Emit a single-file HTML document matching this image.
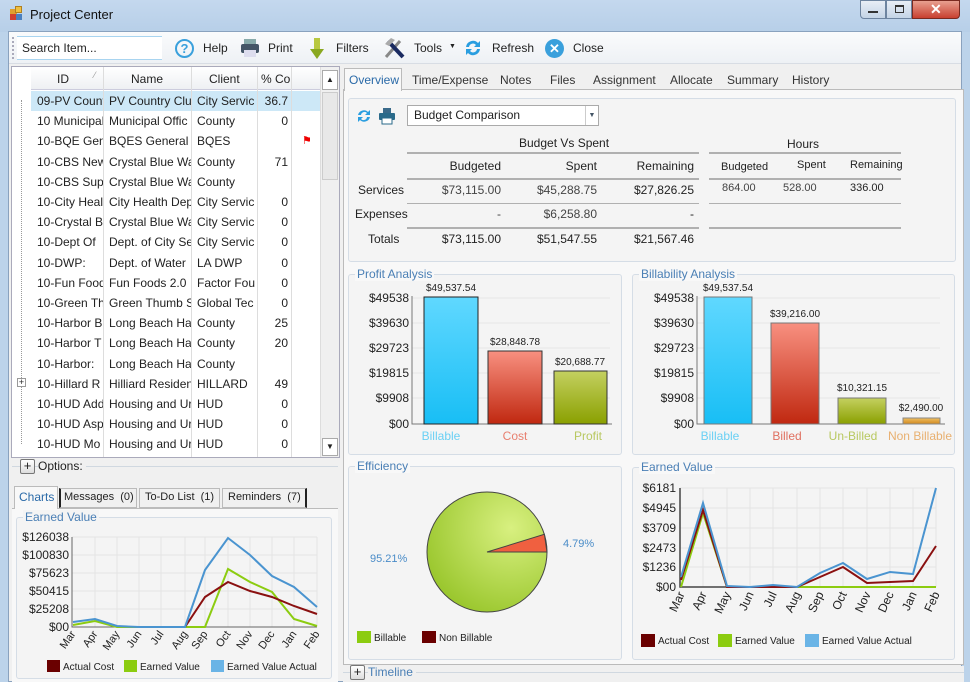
<!DOCTYPE html>
<html><head><meta charset="utf-8"><style>
*{margin:0;padding:0;box-sizing:border-box}
body{width:970px;height:682px;overflow:hidden;background:#bcd3ea;font-family:"Liberation Sans",sans-serif;font-size:12px;color:#222;position:relative}
.a{position:absolute}
.t{position:absolute;white-space:nowrap}
.r{position:absolute;white-space:nowrap;text-align:right;width:120px}
.grp{position:absolute;border:1px solid #d5dde6;border-radius:3px;background:#f4f4f4}
.gl{position:absolute;background:#f4f4f4;color:#4a7fb5;padding:0 2px;font-size:12px;top:-8px;left:6px}
.grid{border-collapse:collapse;font-size:12px;table-layout:fixed;width:260px}
.grid td{height:20.2px;padding:0 3px 0 6px;white-space:nowrap;overflow:hidden}
</style></head><body>
<!-- title -->
<div class="a" style="left:0;top:0;width:970px;height:32px;background:linear-gradient(#c4d8ee,#b7cfe8)"></div>
<div class="a" style="left:10px;top:9px;width:7px;height:6px;background:#e0a030"></div>
<div class="a" style="left:15px;top:6px;width:7px;height:7px;background:#f0c040;border:1px solid #b08020"></div>
<div class="a" style="left:10px;top:14px;width:6px;height:6px;background:#d04030"></div>
<div class="a" style="left:16px;top:14px;width:6px;height:6px;background:#4a80c0"></div>
<div class="t" style="left:30px;top:7px;font-size:13px;color:#111">Project Center</div>
<div class="a" style="left:860px;top:0;width:26px;height:19px;border:1px solid #6d84a0;border-radius:0 0 0 4px;background:linear-gradient(#e8eef6,#c4d4e6)"></div>
<div class="a" style="left:868px;top:11px;width:10px;height:2px;background:#333"></div>
<div class="a" style="left:886px;top:0;width:26px;height:19px;border:1px solid #6d84a0;background:linear-gradient(#e8eef6,#c4d4e6)"></div>
<div class="a" style="left:895px;top:5px;width:9px;height:8px;border:1px solid #333;border-top-width:2px"></div>
<div class="a" style="left:912px;top:0;width:48px;height:19px;border:1px solid #7a2a20;border-radius:0 0 4px 0;background:linear-gradient(#e8a090,#c84030)"></div>
<div class="t" style="left:930px;top:1px;color:#fff;font-size:14px;font-weight:bold">✕</div>
<!-- client area -->
<div class="a" style="left:8px;top:31px;width:954px;height:651px;background:#f0f0f0;border:1px solid #8aa2be"></div>
<div class="a" style="left:9px;top:32px;width:952px;height:32px;background:linear-gradient(#fafbfc,#eef1f5);border-bottom:1px solid #d8dde4"></div>
<div class="a" style="left:12px;top:37px;width:2px;height:22px;border-left:2px dotted #aab"></div>
<div class="a" style="left:17px;top:36px;width:145px;height:24px;background:#fff;border-top:1px solid #a8d4f0;border-bottom:1px solid #a8d4f0"></div>
<div class="t" style="left:22px;top:41px">Search Item...</div>
<div class="a" style="left:175px;top:39px;width:19px;height:19px;border:2px solid #3aa0dc;border-radius:50%;color:#3aa0dc;font-weight:bold;font-size:13px;text-align:center;line-height:15px">?</div>
<div class="t" style="left:203px;top:41px">Help</div>
<div class="a" style="left:240px;top:38px;width:20px;height:20px"><svg width="20" height="20"><rect x="4" y="1" width="12" height="6" fill="#8aa"/><rect x="1" y="6" width="18" height="9" rx="2" fill="#456"/><rect x="4" y="12" width="12" height="7" fill="#dde"/></svg></div>
<div class="t" style="left:268px;top:41px">Print</div>
<div class="a" style="left:310px;top:38px;width:14px;height:20px"><svg width="14" height="22"><rect x="4" y="0" width="6" height="12" fill="#b8c840"/><path d="M0 11h14L7 21z" fill="#8aa820"/></svg></div>
<div class="t" style="left:336px;top:41px">Filters</div>
<div class="a" style="left:383px;top:36px;width:24px;height:24px"><svg width="24" height="24"><path d="M3 21L17 5" stroke="#888" stroke-width="3"/><path d="M5 5l15 16" stroke="#1a2a60" stroke-width="4"/><path d="M2 8l6-6 4 2-6 6z" fill="#aaa"/></svg></div>
<div class="t" style="left:414px;top:41px">Tools</div>
<div class="t" style="left:449px;top:43px;font-size:7px">▼</div>
<div class="a" style="left:463px;top:38px;width:20px;height:20px"><svg width="20" height="20"><path d="M3 9a7 7 0 0 1 12-4l2-2v6h-6l2-2a4 4 0 0 0-7 2z" fill="#2a9ee0"/><path d="M17 11a7 7 0 0 1-12 4l-2 2v-6h6l-2 2a4 4 0 0 0 7-2z" fill="#2a9ee0"/></svg></div>
<div class="t" style="left:492px;top:41px">Refresh</div>
<div class="a" style="left:545px;top:39px;width:19px;height:19px;border-radius:50%;background:#3aa0dc;color:#fff;font-weight:bold;text-align:center;line-height:19px;font-size:13px">✕</div>
<div class="t" style="left:573px;top:41px">Close</div>

<!-- left grid -->
<div class="a" style="left:11px;top:66px;width:329px;height:392px;background:#fff;border:1px solid #aab"></div>
<div class="a" style="left:31px;top:67px;width:289px;height:23px;background:linear-gradient(#fff,#eef0f3);border-bottom:1px solid #ccd"></div>
<div class="a" style="left:31px;top:91px;width:290px;height:20px;background:#cde8f7"></div>
<div class="t" style="left:57px;top:72px">ID</div><div class="t" style="left:94px;top:70px;font-size:9px;color:#999">⁄</div>
<div class="t" style="left:131px;top:72px">Name</div>
<div class="t" style="left:209px;top:72px">Client</div>
<div class="t" style="left:261px;top:72px">% Co</div>
<div class="a" style="left:31px;top:91px;font-size:12px;line-height:20.2px">
<table class="grid">
<colgroup><col style="width:72px"><col style="width:88px"><col style="width:66px"><col style="width:34px"></colgroup>
<tr><td>09-PV Count</td><td>PV Country Clu</td><td>City Servic</td><td style="text-align:right">36.7</td></tr>
<tr><td>10 Municipal</td><td>Municipal Offic</td><td>County</td><td style="text-align:right">0</td></tr>
<tr><td>10-BQE Gen</td><td>BQES General</td><td>BQES</td><td></td></tr>
<tr><td>10-CBS New</td><td>Crystal Blue Wa</td><td>County</td><td style="text-align:right">71</td></tr>
<tr><td>10-CBS Sup</td><td>Crystal Blue Wa</td><td>County</td><td></td></tr>
<tr><td>10-City Heal</td><td>City Health Dep</td><td>City Servic</td><td style="text-align:right">0</td></tr>
<tr><td>10-Crystal Bl</td><td>Crystal Blue Wa</td><td>City Servic</td><td style="text-align:right">0</td></tr>
<tr><td>10-Dept Of</td><td>Dept. of City Se</td><td>City Servic</td><td style="text-align:right">0</td></tr>
<tr><td>10-DWP:</td><td>Dept. of Water</td><td>LA DWP</td><td style="text-align:right">0</td></tr>
<tr><td>10-Fun Food</td><td>Fun Foods 2.0</td><td>Factor Fou</td><td style="text-align:right">0</td></tr>
<tr><td>10-Green Th</td><td>Green Thumb S</td><td>Global Tec</td><td style="text-align:right">0</td></tr>
<tr><td>10-Harbor Bl</td><td>Long Beach Har</td><td>County</td><td style="text-align:right">25</td></tr>
<tr><td>10-Harbor T</td><td>Long Beach Har</td><td>County</td><td style="text-align:right">20</td></tr>
<tr><td>10-Harbor:</td><td>Long Beach Har</td><td>County</td><td></td></tr>
<tr><td>10-Hillard R</td><td>Hilliard Residen</td><td>HILLARD</td><td style="text-align:right">49</td></tr>
<tr><td>10-HUD Add</td><td>Housing and Ur</td><td>HUD</td><td style="text-align:right">0</td></tr>
<tr><td>10-HUD Asp</td><td>Housing and Ur</td><td>HUD</td><td style="text-align:right">0</td></tr>
<tr><td>10-HUD Mo</td><td>Housing and Ur</td><td>HUD</td><td style="text-align:right">0</td></tr>
</table></div>
<div class="a" style="left:103px;top:67px;width:1px;height:390px;background:#ddd"></div>
<div class="a" style="left:191px;top:67px;width:1px;height:390px;background:#ddd"></div>
<div class="a" style="left:257px;top:67px;width:1px;height:390px;background:#ddd"></div>
<div class="a" style="left:291px;top:67px;width:1px;height:390px;background:#ddd"></div>
<div class="a" style="left:320px;top:67px;width:1px;height:390px;background:#ddd"></div>
<div class="a" style="left:321px;top:67px;width:18px;height:390px;background:#f0f0f0"></div>
<div class="a" style="left:322px;top:70px;width:16px;height:20px;border:1px solid #aaa;background:#fff;font-size:8px;text-align:center;line-height:18px">▲</div>
<div class="a" style="left:322px;top:92px;width:16px;height:88px;border:1px solid #ccc;background:#e8e8e8"></div>
<div class="a" style="left:322px;top:438px;width:16px;height:18px;border:1px solid #aaa;background:#fff;font-size:8px;text-align:center;line-height:16px">▼</div>
<div class="a" style="left:21px;top:100px;width:1px;height:344px;border-left:1px dotted #999"></div>
<div class="t" style="left:302px;top:134px;color:#e00;font-size:11px">⚑</div>
<div class="a" style="left:17px;top:378px;width:9px;height:9px;border:1px solid #999;background:#fff;font-size:9px;line-height:7px;text-align:center">+</div>

<!-- options -->
<div class="a" style="left:12px;top:466px;width:326px;height:1px;background:#d0d8e0"></div>
<div class="a" style="left:20px;top:459px;width:15px;height:15px;border:1px solid #777;border-radius:2px;background:linear-gradient(#fff,#ddd);text-align:center;line-height:12px;font-size:13px">+</div>
<div class="t" style="left:38px;top:459px;background:#f0f0f0;padding-right:3px">Options:</div>
<!-- bottom tabs -->
<div class="a" style="left:12px;top:508px;width:326px;height:174px;background:#f8f8f8;border-top:1px solid #bbb"></div>
<div class="a" style="left:14px;top:486px;width:44px;height:23px;background:#f8f8f8;border:1px solid #bbb;border-bottom:none"></div>
<div class="t" style="left:19px;top:490px;color:#2a6aa8">Charts</div>
<div class="a" style="left:59px;top:488px;width:78px;height:20px;border:1px solid #bbb;border-left:2px solid #222;background:#f0f0f0"></div>
<div class="t" style="left:64px;top:491px;font-size:11px">Messages &nbsp;(0)</div>
<div class="a" style="left:139px;top:488px;width:81px;height:20px;border:1px solid #bbb;background:#f0f0f0"></div>
<div class="t" style="left:145px;top:491px;font-size:11px">To-Do List &nbsp;(1)</div>
<div class="a" style="left:222px;top:488px;width:85px;height:20px;border:1px solid #bbb;border-right:2px solid #222;background:#f0f0f0"></div>
<div class="t" style="left:228px;top:491px;font-size:11px">Reminders &nbsp;(7)</div>
<div class="grp" style="left:16px;top:517px;width:316px;height:162px"><div class="gl">Earned Value</div></div>
<svg class="a" style="left:0;top:0" width="340" height="682">
<g stroke="#e4e4e4"><path d="M72 537H317M72 555H317M72 573H317M72 591H317M72 609H317M95 537V627M117 537V627M139 537V627M161 537V627M185 537V627M205 537V627M228 537V627M250 537V627M272 537V627M294 537V627M317 537V627"/></g>
<path d="M72 537V627H317" stroke="#666" fill="none"/>
<g font-size="12" font-family="Liberation Sans" text-anchor="end" fill="#222"><text x="69" y="541">$126038</text><text x="69" y="559">$100830</text><text x="69" y="577">$75623</text><text x="69" y="595">$50415</text><text x="69" y="613">$25208</text><text x="69" y="631">$00</text></g>
<polyline points="73,625 95,621 117,627 139,627 161,627 185,627 205,627 228,569 250,582 272,592 294,619 317,626" fill="none" stroke="#8ccc10" stroke-width="2"/>
<polyline points="185,627 205,597 228,582 250,591 272,597 294,606 317,614" fill="none" stroke="#8a1010" stroke-width="2"/>
<polyline points="73,622 95,619 117,626 139,627 161,627 185,627 205,570 228,538 250,555 272,576 294,587 317,607" fill="none" stroke="#4a94d0" stroke-width="2"/>
<g font-size="11" font-family="Liberation Sans" text-anchor="end" fill="#222">
<text transform="translate(76,634) rotate(-55)">Mar</text><text transform="translate(98,634) rotate(-55)">Apr</text><text transform="translate(120,634) rotate(-55)">May</text><text transform="translate(142,634) rotate(-55)">Jun</text><text transform="translate(164,634) rotate(-55)">Jul</text><text transform="translate(188,634) rotate(-55)">Aug</text><text transform="translate(208,634) rotate(-55)">Sep</text><text transform="translate(231,634) rotate(-55)">Oct</text><text transform="translate(253,634) rotate(-55)">Nov</text><text transform="translate(275,634) rotate(-55)">Dec</text><text transform="translate(297,634) rotate(-55)">Jan</text><text transform="translate(320,634) rotate(-55)">Feb</text></g>
<rect x="47" y="660" width="13" height="12" fill="#6a0000"/><rect x="124" y="660" width="13" height="12" fill="#8ccc10"/><rect x="211" y="660" width="13" height="12" fill="#6ab4e6"/>
<g font-size="10" font-family="Liberation Sans" fill="#222"><text x="63" y="670">Actual Cost</text><text x="140" y="670">Earned Value</text><text x="227" y="670">Earned Value Actual</text></g>
</svg>

<!-- right panel -->
<div class="a" style="left:343px;top:89px;width:621px;height:576px;background:#f8f8f8;border:1px solid #bbb"></div>
<div class="a" style="left:344px;top:68px;width:58px;height:23px;background:#f8f8f8;border:1px solid #bbb;border-bottom:none"></div>
<div class="t" style="left:349px;top:73px;color:#2a6aa8">Overview</div>
<div class="t" style="left:412px;top:73px;color:#333">Time/Expense</div>
<div class="t" style="left:500px;top:73px;color:#333">Notes</div>
<div class="t" style="left:550px;top:73px;color:#333">Files</div>
<div class="t" style="left:593px;top:73px;color:#333">Assignment</div>
<div class="t" style="left:670px;top:73px;color:#333">Allocate</div>
<div class="t" style="left:727px;top:73px;color:#333">Summary</div>
<div class="t" style="left:792px;top:73px;color:#333">History</div>
<div class="grp" style="left:348px;top:98px;width:608px;height:164px"></div>
<div class="a" style="left:357px;top:109px;width:14px;height:14px"><svg width="14" height="14"><path d="M1 6a6 6 0 0 1 10-3l2-2v5H8l2-2a3.5 3.5 0 0 0-6 2z" fill="#2a9ee0"/><path d="M13 8a6 6 0 0 1-10 3l-2 2V8h5l-2 2a3.5 3.5 0 0 0 6-2z" fill="#2a9ee0"/></svg></div>
<div class="a" style="left:379px;top:108px;width:16px;height:17px"><svg width="16" height="17"><rect x="4" y="0" width="8" height="5" fill="#3a6a8a"/><rect x="0" y="5" width="16" height="7" rx="1" fill="#2a6a8a"/><rect x="3" y="10" width="10" height="6" fill="#fff" stroke="#2a6a8a"/></svg></div>
<div class="a" style="left:407px;top:105px;width:192px;height:21px;background:#fff;border:1px solid #aaa"></div>
<div class="t" style="left:414px;top:108px">Budget Comparison</div>
<div class="a" style="left:585px;top:106px;width:13px;height:19px;border-left:1px solid #ccc;font-size:7px;color:#456;text-align:center;line-height:19px">▼</div>
<div class="t" style="left:519px;top:136px">Budget Vs Spent</div>
<div class="t" style="left:787px;top:137px">Hours</div>
<div class="a" style="left:407px;top:152px;width:292px;height:2px;background:#b0b0b0"></div>
<div class="a" style="left:709px;top:152px;width:192px;height:2px;background:#b0b0b0"></div>
<div class="a" style="left:407px;top:178px;width:292px;height:2px;background:#b0b0b0"></div>
<div class="a" style="left:709px;top:178px;width:192px;height:2px;background:#b0b0b0"></div>
<div class="a" style="left:407px;top:203px;width:292px;height:1px;background:#b0b0b0"></div>
<div class="a" style="left:709px;top:203px;width:192px;height:1px;background:#b0b0b0"></div>
<div class="a" style="left:407px;top:227px;width:292px;height:2px;background:#b0b0b0"></div>
<div class="a" style="left:709px;top:227px;width:192px;height:2px;background:#b0b0b0"></div>
<div class="r" style="left:381px;top:159px">Budgeted</div>
<div class="r" style="left:477px;top:159px">Spent</div>
<div class="r" style="left:574px;top:159px">Remaining</div>
<div class="t" style="left:721px;top:161px;font-size:11px">Budgeted</div>
<div class="t" style="left:797px;top:159px;font-size:11px">Spent</div>
<div class="t" style="left:850px;top:159px;font-size:11px">Remaining</div>
<div class="t" style="left:358px;top:183px">Services</div>
<div class="t" style="left:355px;top:207px">Expenses</div>
<div class="t" style="left:368px;top:232px">Totals</div>
<div class="r" style="left:381px;top:183px;color:#444">$73,115.00</div>
<div class="r" style="left:477px;top:183px;color:#444">$45,288.75</div>
<div class="r" style="left:574px;top:183px">$27,826.25</div>
<div class="t" style="left:722px;top:182px;font-size:11px;color:#444">864.00</div>
<div class="t" style="left:783px;top:182px;font-size:11px;color:#444">528.00</div>
<div class="t" style="left:850px;top:182px;font-size:11px">336.00</div>
<div class="r" style="left:381px;top:207px;color:#444">-</div>
<div class="r" style="left:477px;top:207px;color:#444">$6,258.80</div>
<div class="r" style="left:574px;top:207px">-</div>
<div class="r" style="left:381px;top:232px">$73,115.00</div>
<div class="r" style="left:477px;top:232px">$51,547.55</div>
<div class="r" style="left:574px;top:232px">$21,567.46</div>

<div class="grp" style="left:348px;top:274px;width:274px;height:181px"><div class="gl" style="background:#f8f8f8">Profit Analysis</div></div>
<div class="grp" style="left:632px;top:274px;width:323px;height:181px"><div class="gl" style="background:#f8f8f8">Billability Analysis</div></div>
<div class="grp" style="left:348px;top:466px;width:274px;height:194px"><div class="gl" style="background:#f8f8f8">Efficiency</div></div>
<div class="grp" style="left:632px;top:467px;width:323px;height:193px"><div class="gl" style="background:#f8f8f8">Earned Value</div></div>

<svg class="a" style="left:0;top:0" width="970" height="682">
<defs>
<linearGradient id="cy" x1="0" y1="0" x2="0" y2="1"><stop offset="0" stop-color="#60d8ff"/><stop offset="1" stop-color="#18bef5"/></linearGradient>
<linearGradient id="rd" x1="0" y1="0" x2="0" y2="1"><stop offset="0" stop-color="#f89080"/><stop offset="1" stop-color="#c02810"/></linearGradient>
<linearGradient id="ol" x1="0" y1="0" x2="0" y2="1"><stop offset="0" stop-color="#c4d060"/><stop offset="1" stop-color="#8aa000"/></linearGradient>
<linearGradient id="or" x1="0" y1="0" x2="0" y2="1"><stop offset="0" stop-color="#f0c060"/><stop offset="1" stop-color="#d08820"/></linearGradient>
<radialGradient id="pg" cx="0.7" cy="0.3" r="0.9"><stop offset="0" stop-color="#d8f080"/><stop offset="1" stop-color="#90c020"/></radialGradient>
</defs>
<g stroke="#e6e6e6"><path d="M412 298H610M412 323H610M412 348H610M412 373H610M412 398H610"/><path d="M697 298H940M697 323H940M697 348H940M697 373H940M697 398H940"/></g>
<path d="M412 296V424H612" stroke="#777" fill="none"/>
<path d="M697 296V424H945" stroke="#777" fill="none"/>
<g font-size="12" font-family="Liberation Sans" text-anchor="end" fill="#222">
<text x="409" y="302">$49538</text><text x="409" y="327">$39630</text><text x="409" y="352">$29723</text><text x="409" y="377">$19815</text><text x="409" y="402">$9908</text><text x="409" y="428">$00</text>
<text x="694" y="302">$49538</text><text x="694" y="327">$39630</text><text x="694" y="352">$29723</text><text x="694" y="377">$19815</text><text x="694" y="402">$9908</text><text x="694" y="428">$00</text></g>
<rect x="424" y="297" width="54" height="127" fill="url(#cy)" stroke="#222"/>
<rect x="488" y="351" width="54" height="73" fill="url(#rd)" stroke="#333"/>
<rect x="554" y="371" width="53" height="53" fill="url(#ol)" stroke="#333"/>
<rect x="704" y="297" width="48" height="127" fill="url(#cy)" stroke="#777"/>
<rect x="771" y="323" width="48" height="101" fill="url(#rd)" stroke="#777"/>
<rect x="838" y="398" width="48" height="26" fill="url(#ol)" stroke="#777"/>
<rect x="903" y="418" width="37" height="6" fill="url(#or)" stroke="#888"/>
<g font-size="10" font-family="Liberation Sans" text-anchor="middle" fill="#222">
<text x="451" y="291">$49,537.54</text><text x="515" y="345">$28,848.78</text><text x="580" y="365">$20,688.77</text>
<text x="728" y="291">$49,537.54</text><text x="795" y="317">$39,216.00</text><text x="862" y="391">$10,321.15</text><text x="921" y="411">$2,490.00</text></g>
<g font-size="12" font-family="Liberation Sans" text-anchor="middle">
<text x="441" y="440" fill="#6ad0f4">Billable</text><text x="515" y="440" fill="#e88070">Cost</text><text x="588" y="440" fill="#b8c860">Profit</text>
<text x="720" y="440" fill="#6ad0f4">Billable</text><text x="787" y="440" fill="#e07060">Billed</text><text x="853" y="440" fill="#b8c860">Un-Billed</text><text x="920" y="440" fill="#e8b070">Non Billable</text></g>
<circle cx="487" cy="552" r="60" fill="url(#pg)" stroke="#444"/>
<path d="M487 552L547 552L544.4 534.3z" fill="#f06040" stroke="#444"/>
<g font-size="11" font-family="Liberation Sans" fill="#4a8cc8"><text x="370" y="562">95.21%</text><text x="563" y="547">4.79%</text></g>
<rect x="357" y="631" width="14" height="12" fill="#8ccc10"/><rect x="422" y="631" width="14" height="12" fill="#6a0000"/>
<g font-size="10" font-family="Liberation Sans" fill="#222"><text x="374" y="641">Billable</text><text x="439" y="641">Non Billable</text></g>
<g stroke="#e4e4e4"><path d="M680 488H936M680 508H936M680 528H936M680 548H936M680 567H936M703 488V587M727 488V587M750 488V587M773 488V587M797 488V587M820 488V587M843 488V587M867 488V587M890 488V587M913 488V587M936 488V587"/></g>
<path d="M680 488V587H936" stroke="#444" fill="none" stroke-width="1.5"/>
<g font-size="12" font-family="Liberation Sans" text-anchor="end" fill="#222"><text x="676" y="492">$6181</text><text x="676" y="512">$4945</text><text x="676" y="532">$3709</text><text x="676" y="552">$2473</text><text x="676" y="571">$1236</text><text x="676" y="591">$00</text></g>
<polyline points="681,587 703,513 727,587 750,587 773,587 797,587 820,587 843,587 867,587 890,587 913,587 936,587" fill="none" stroke="#8ccc10" stroke-width="2"/>
<polyline points="681,580 703,510 727,587 750,587 773,587 797,587 820,577 843,567 867,583 890,582 913,581 936,546" fill="none" stroke="#8a1010" stroke-width="2"/>
<polyline points="681,577 703,503 727,586 750,587 773,585 797,587 820,573 843,563 867,579 890,572 913,574 936,488" fill="none" stroke="#4a94d0" stroke-width="2"/>
<g font-size="12" font-family="Liberation Sans" text-anchor="end" fill="#222">
<text transform="translate(685,594) rotate(-65)">Mar</text><text transform="translate(707,594) rotate(-65)">Apr</text><text transform="translate(731,594) rotate(-65)">May</text><text transform="translate(754,594) rotate(-65)">Jun</text><text transform="translate(777,594) rotate(-65)">Jul</text><text transform="translate(801,594) rotate(-65)">Aug</text><text transform="translate(824,594) rotate(-65)">Sep</text><text transform="translate(847,594) rotate(-65)">Oct</text><text transform="translate(871,594) rotate(-65)">Nov</text><text transform="translate(894,594) rotate(-65)">Dec</text><text transform="translate(917,594) rotate(-65)">Jan</text><text transform="translate(940,594) rotate(-65)">Feb</text></g>
<rect x="641" y="634" width="14" height="13" fill="#6a0000"/><rect x="718" y="634" width="14" height="13" fill="#8ccc10"/><rect x="805" y="634" width="14" height="13" fill="#6ab4e6"/>
<g font-size="10" font-family="Liberation Sans" fill="#222"><text x="658" y="644">Actual Cost</text><text x="735" y="644">Earned Value</text><text x="822" y="644">Earned Value Actual</text></g>
</svg>
<div class="a" style="left:343px;top:666px;width:621px;height:16px;background:#f0f0f0"></div>
<div class="a" style="left:343px;top:672px;width:621px;height:1px;background:#d0d8e0"></div>
<div class="a" style="left:350px;top:665px;width:15px;height:15px;border:1px solid #777;border-radius:2px;background:linear-gradient(#fff,#ddd);text-align:center;line-height:12px;font-size:13px">+</div>
<div class="t" style="left:368px;top:665px;background:#f0f0f0;color:#4a7fb5;padding-right:3px">Timeline</div>
</body></html>
